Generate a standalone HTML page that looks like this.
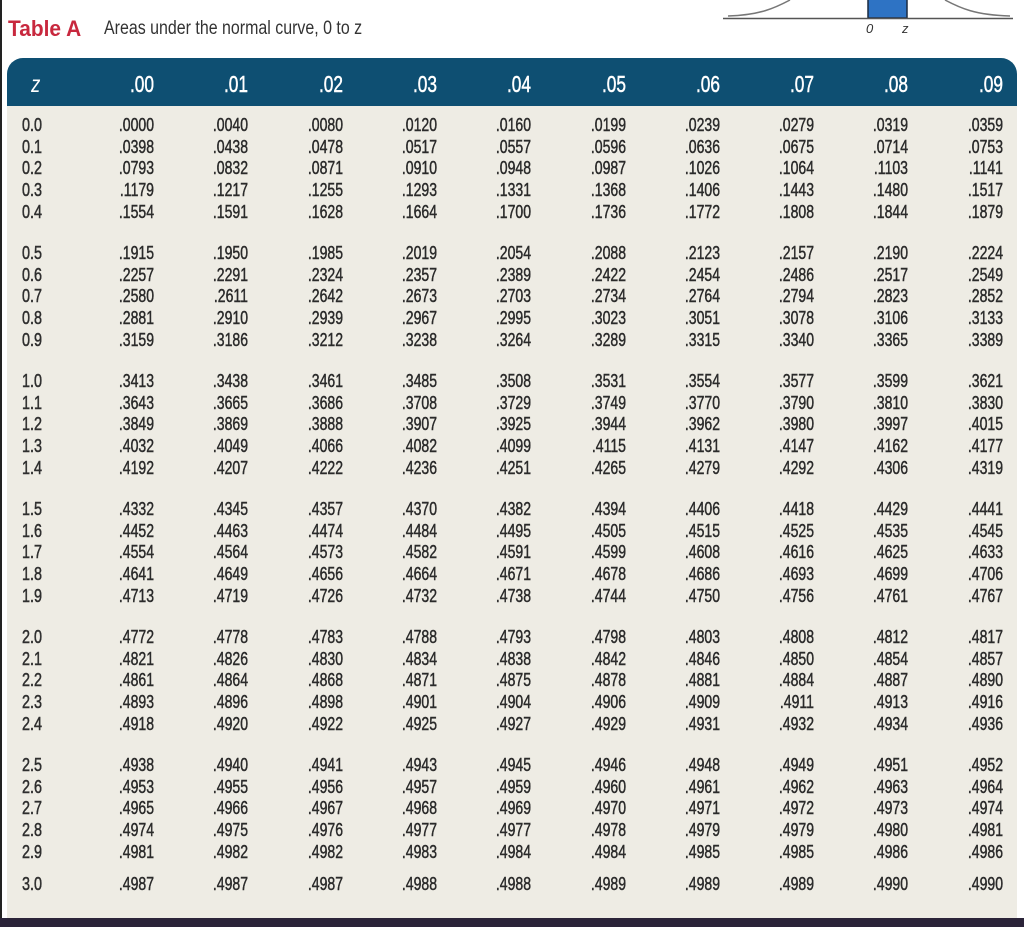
<!DOCTYPE html>
<html><head><meta charset="utf-8"><style>
*{margin:0;padding:0;box-sizing:border-box}
body{width:1024px;height:927px;background:#fff;position:relative;overflow:hidden;font-family:"Liberation Sans",sans-serif}
#lb{position:absolute;left:0;top:0;width:2px;height:927px;background:#222}
#panel{position:absolute;left:7px;top:58px;width:1010px;height:860px;background:#eeece4;border-radius:16px 16px 0 0;overflow:hidden}
#hd{position:absolute;left:0;top:0;width:1010px;height:48px;background:#0e4f72}
#foot{position:absolute;left:0;top:918px;width:1024px;height:9px;background:#2b2439}
.r{position:absolute;left:0;height:20px;width:1024px}
.c{position:absolute;top:0;width:60px;text-align:right;font-size:18px;line-height:20px;color:#2a2a2a;-webkit-text-stroke:0.45px #2a2a2a;transform:scaleX(.78);transform-origin:right center}
.z{position:absolute;left:22px;top:0;font-size:18px;line-height:20px;color:#2e2e2e;-webkit-text-stroke:0.5px #2e2e2e;transform:scaleX(.8);transform-origin:left center}
.h{position:absolute;top:72px;width:60px;text-align:right;font-size:23px;line-height:24px;color:#fff;-webkit-text-stroke:0.5px #fff;transform:scaleX(.75);transform-origin:right center}
</style></head><body>
<div id="lb"></div>
<svg style="position:absolute;left:0;top:0" width="1024" height="40">
<path d="M728 16 C760 15 775 8 790 0" fill="none" stroke="#777" stroke-width="1.5"/>
<path d="M945 0 C960 8 975 15 1010 16" fill="none" stroke="#777" stroke-width="1.5"/>
<rect x="868" y="-1" width="39" height="19" fill="#2e73c4" stroke="#1a2a40" stroke-width="1.5"/>
<line x1="723" y1="18.5" x2="1013" y2="18.5" stroke="#555" stroke-width="1.5"/>
<text x="866" y="33" font-size="13" font-family="Liberation Sans" font-style="italic" fill="#333">0</text>
<text x="902" y="33" font-size="13" font-family="Liberation Sans" font-style="italic" fill="#333">z</text>
</svg>
<div style="position:absolute;left:8px;top:16px;font-size:22px;font-weight:bold;color:#c8283e;transform:scaleX(.95);transform-origin:left">Table A</div>
<div style="position:absolute;left:104px;top:18px;font-size:19px;color:#333;transform:scaleX(.84);transform-origin:left">Areas under the normal curve, 0 to z</div>
<div id="panel"><div id="hd"></div></div>
<div id="foot"></div>
<div style="position:absolute;left:30px;top:72px;font-size:23px;line-height:24px;color:#fff;font-style:italic;transform:scaleX(.8)">z</div>
<div class="h" style="left:94px">.00</div><div class="h" style="left:188px">.01</div><div class="h" style="left:283px">.02</div><div class="h" style="left:377px">.03</div><div class="h" style="left:471px">.04</div><div class="h" style="left:566px">.05</div><div class="h" style="left:660px">.06</div><div class="h" style="left:754px">.07</div><div class="h" style="left:848px">.08</div><div class="h" style="left:943px">.09</div>

<style>
.r .c:nth-of-type(2){left:94px}.r .c:nth-of-type(3){left:188px}.r .c:nth-of-type(4){left:283px}.r .c:nth-of-type(5){left:377px}.r .c:nth-of-type(6){left:471px}.r .c:nth-of-type(7){left:566px}.r .c:nth-of-type(8){left:660px}.r .c:nth-of-type(9){left:754px}.r .c:nth-of-type(10){left:848px}.r .c:nth-of-type(11){left:943px}
</style>
<div class="r" style="top:115px"><span class="z">0.0</span><span class="c">.0000</span><span class="c">.0040</span><span class="c">.0080</span><span class="c">.0120</span><span class="c">.0160</span><span class="c">.0199</span><span class="c">.0239</span><span class="c">.0279</span><span class="c">.0319</span><span class="c">.0359</span></div>
<div class="r" style="top:137px"><span class="z">0.1</span><span class="c">.0398</span><span class="c">.0438</span><span class="c">.0478</span><span class="c">.0517</span><span class="c">.0557</span><span class="c">.0596</span><span class="c">.0636</span><span class="c">.0675</span><span class="c">.0714</span><span class="c">.0753</span></div>
<div class="r" style="top:158px"><span class="z">0.2</span><span class="c">.0793</span><span class="c">.0832</span><span class="c">.0871</span><span class="c">.0910</span><span class="c">.0948</span><span class="c">.0987</span><span class="c">.1026</span><span class="c">.1064</span><span class="c">.1103</span><span class="c">.1141</span></div>
<div class="r" style="top:180px"><span class="z">0.3</span><span class="c">.1179</span><span class="c">.1217</span><span class="c">.1255</span><span class="c">.1293</span><span class="c">.1331</span><span class="c">.1368</span><span class="c">.1406</span><span class="c">.1443</span><span class="c">.1480</span><span class="c">.1517</span></div>
<div class="r" style="top:202px"><span class="z">0.4</span><span class="c">.1554</span><span class="c">.1591</span><span class="c">.1628</span><span class="c">.1664</span><span class="c">.1700</span><span class="c">.1736</span><span class="c">.1772</span><span class="c">.1808</span><span class="c">.1844</span><span class="c">.1879</span></div>

<div class="r" style="top:243px"><span class="z">0.5</span><span class="c">.1915</span><span class="c">.1950</span><span class="c">.1985</span><span class="c">.2019</span><span class="c">.2054</span><span class="c">.2088</span><span class="c">.2123</span><span class="c">.2157</span><span class="c">.2190</span><span class="c">.2224</span></div>
<div class="r" style="top:265px"><span class="z">0.6</span><span class="c">.2257</span><span class="c">.2291</span><span class="c">.2324</span><span class="c">.2357</span><span class="c">.2389</span><span class="c">.2422</span><span class="c">.2454</span><span class="c">.2486</span><span class="c">.2517</span><span class="c">.2549</span></div>
<div class="r" style="top:286px"><span class="z">0.7</span><span class="c">.2580</span><span class="c">.2611</span><span class="c">.2642</span><span class="c">.2673</span><span class="c">.2703</span><span class="c">.2734</span><span class="c">.2764</span><span class="c">.2794</span><span class="c">.2823</span><span class="c">.2852</span></div>
<div class="r" style="top:308px"><span class="z">0.8</span><span class="c">.2881</span><span class="c">.2910</span><span class="c">.2939</span><span class="c">.2967</span><span class="c">.2995</span><span class="c">.3023</span><span class="c">.3051</span><span class="c">.3078</span><span class="c">.3106</span><span class="c">.3133</span></div>
<div class="r" style="top:330px"><span class="z">0.9</span><span class="c">.3159</span><span class="c">.3186</span><span class="c">.3212</span><span class="c">.3238</span><span class="c">.3264</span><span class="c">.3289</span><span class="c">.3315</span><span class="c">.3340</span><span class="c">.3365</span><span class="c">.3389</span></div>

<div class="r" style="top:371px"><span class="z">1.0</span><span class="c">.3413</span><span class="c">.3438</span><span class="c">.3461</span><span class="c">.3485</span><span class="c">.3508</span><span class="c">.3531</span><span class="c">.3554</span><span class="c">.3577</span><span class="c">.3599</span><span class="c">.3621</span></div>
<div class="r" style="top:393px"><span class="z">1.1</span><span class="c">.3643</span><span class="c">.3665</span><span class="c">.3686</span><span class="c">.3708</span><span class="c">.3729</span><span class="c">.3749</span><span class="c">.3770</span><span class="c">.3790</span><span class="c">.3810</span><span class="c">.3830</span></div>
<div class="r" style="top:414px"><span class="z">1.2</span><span class="c">.3849</span><span class="c">.3869</span><span class="c">.3888</span><span class="c">.3907</span><span class="c">.3925</span><span class="c">.3944</span><span class="c">.3962</span><span class="c">.3980</span><span class="c">.3997</span><span class="c">.4015</span></div>
<div class="r" style="top:436px"><span class="z">1.3</span><span class="c">.4032</span><span class="c">.4049</span><span class="c">.4066</span><span class="c">.4082</span><span class="c">.4099</span><span class="c">.4115</span><span class="c">.4131</span><span class="c">.4147</span><span class="c">.4162</span><span class="c">.4177</span></div>
<div class="r" style="top:458px"><span class="z">1.4</span><span class="c">.4192</span><span class="c">.4207</span><span class="c">.4222</span><span class="c">.4236</span><span class="c">.4251</span><span class="c">.4265</span><span class="c">.4279</span><span class="c">.4292</span><span class="c">.4306</span><span class="c">.4319</span></div>

<div class="r" style="top:499px"><span class="z">1.5</span><span class="c">.4332</span><span class="c">.4345</span><span class="c">.4357</span><span class="c">.4370</span><span class="c">.4382</span><span class="c">.4394</span><span class="c">.4406</span><span class="c">.4418</span><span class="c">.4429</span><span class="c">.4441</span></div>
<div class="r" style="top:521px"><span class="z">1.6</span><span class="c">.4452</span><span class="c">.4463</span><span class="c">.4474</span><span class="c">.4484</span><span class="c">.4495</span><span class="c">.4505</span><span class="c">.4515</span><span class="c">.4525</span><span class="c">.4535</span><span class="c">.4545</span></div>
<div class="r" style="top:542px"><span class="z">1.7</span><span class="c">.4554</span><span class="c">.4564</span><span class="c">.4573</span><span class="c">.4582</span><span class="c">.4591</span><span class="c">.4599</span><span class="c">.4608</span><span class="c">.4616</span><span class="c">.4625</span><span class="c">.4633</span></div>
<div class="r" style="top:564px"><span class="z">1.8</span><span class="c">.4641</span><span class="c">.4649</span><span class="c">.4656</span><span class="c">.4664</span><span class="c">.4671</span><span class="c">.4678</span><span class="c">.4686</span><span class="c">.4693</span><span class="c">.4699</span><span class="c">.4706</span></div>
<div class="r" style="top:586px"><span class="z">1.9</span><span class="c">.4713</span><span class="c">.4719</span><span class="c">.4726</span><span class="c">.4732</span><span class="c">.4738</span><span class="c">.4744</span><span class="c">.4750</span><span class="c">.4756</span><span class="c">.4761</span><span class="c">.4767</span></div>

<div class="r" style="top:627px"><span class="z">2.0</span><span class="c">.4772</span><span class="c">.4778</span><span class="c">.4783</span><span class="c">.4788</span><span class="c">.4793</span><span class="c">.4798</span><span class="c">.4803</span><span class="c">.4808</span><span class="c">.4812</span><span class="c">.4817</span></div>
<div class="r" style="top:649px"><span class="z">2.1</span><span class="c">.4821</span><span class="c">.4826</span><span class="c">.4830</span><span class="c">.4834</span><span class="c">.4838</span><span class="c">.4842</span><span class="c">.4846</span><span class="c">.4850</span><span class="c">.4854</span><span class="c">.4857</span></div>
<div class="r" style="top:670px"><span class="z">2.2</span><span class="c">.4861</span><span class="c">.4864</span><span class="c">.4868</span><span class="c">.4871</span><span class="c">.4875</span><span class="c">.4878</span><span class="c">.4881</span><span class="c">.4884</span><span class="c">.4887</span><span class="c">.4890</span></div>
<div class="r" style="top:692px"><span class="z">2.3</span><span class="c">.4893</span><span class="c">.4896</span><span class="c">.4898</span><span class="c">.4901</span><span class="c">.4904</span><span class="c">.4906</span><span class="c">.4909</span><span class="c">.4911</span><span class="c">.4913</span><span class="c">.4916</span></div>
<div class="r" style="top:714px"><span class="z">2.4</span><span class="c">.4918</span><span class="c">.4920</span><span class="c">.4922</span><span class="c">.4925</span><span class="c">.4927</span><span class="c">.4929</span><span class="c">.4931</span><span class="c">.4932</span><span class="c">.4934</span><span class="c">.4936</span></div>

<div class="r" style="top:755px"><span class="z">2.5</span><span class="c">.4938</span><span class="c">.4940</span><span class="c">.4941</span><span class="c">.4943</span><span class="c">.4945</span><span class="c">.4946</span><span class="c">.4948</span><span class="c">.4949</span><span class="c">.4951</span><span class="c">.4952</span></div>
<div class="r" style="top:777px"><span class="z">2.6</span><span class="c">.4953</span><span class="c">.4955</span><span class="c">.4956</span><span class="c">.4957</span><span class="c">.4959</span><span class="c">.4960</span><span class="c">.4961</span><span class="c">.4962</span><span class="c">.4963</span><span class="c">.4964</span></div>
<div class="r" style="top:798px"><span class="z">2.7</span><span class="c">.4965</span><span class="c">.4966</span><span class="c">.4967</span><span class="c">.4968</span><span class="c">.4969</span><span class="c">.4970</span><span class="c">.4971</span><span class="c">.4972</span><span class="c">.4973</span><span class="c">.4974</span></div>
<div class="r" style="top:820px"><span class="z">2.8</span><span class="c">.4974</span><span class="c">.4975</span><span class="c">.4976</span><span class="c">.4977</span><span class="c">.4977</span><span class="c">.4978</span><span class="c">.4979</span><span class="c">.4979</span><span class="c">.4980</span><span class="c">.4981</span></div>
<div class="r" style="top:842px"><span class="z">2.9</span><span class="c">.4981</span><span class="c">.4982</span><span class="c">.4982</span><span class="c">.4983</span><span class="c">.4984</span><span class="c">.4984</span><span class="c">.4985</span><span class="c">.4985</span><span class="c">.4986</span><span class="c">.4986</span></div>

<div class="r" style="top:874px"><span class="z">3.0</span><span class="c">.4987</span><span class="c">.4987</span><span class="c">.4987</span><span class="c">.4988</span><span class="c">.4988</span><span class="c">.4989</span><span class="c">.4989</span><span class="c">.4989</span><span class="c">.4990</span><span class="c">.4990</span></div>
</body></html>
